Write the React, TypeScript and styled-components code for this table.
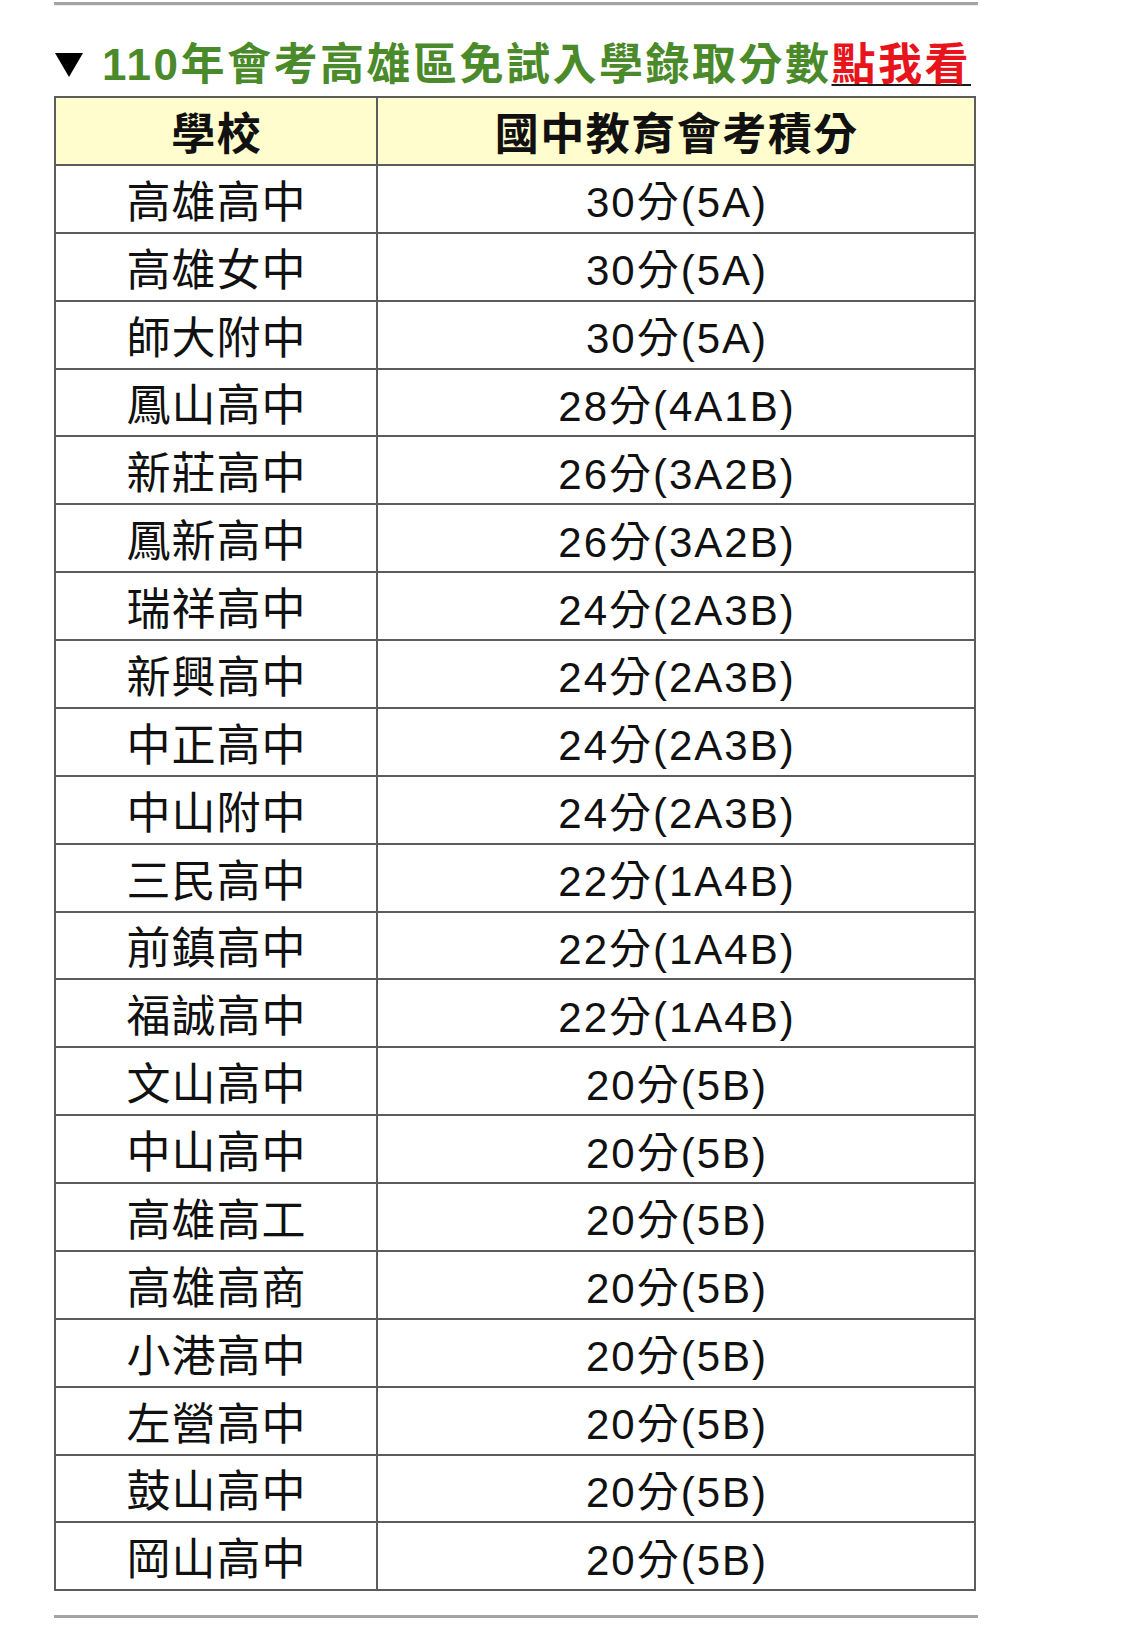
import React from "react";
import styled, { createGlobalStyle } from "styled-components";

const GlobalStyle = createGlobalStyle`
  html, body {
    margin: 0;
    padding: 0;
    background: #ffffff;
  }
  body {
    font-family: "Liberation Sans", "Noto Sans CJK TC", sans-serif;
    color: #111;
  }
`;

const Page = styled.div`
  width: 922px;
  padding: 2px 0 0 54px;
`;

const Rule = styled.div<{ $mt?: number }>`
  height: 3px;
  margin-top: ${(p) => p.$mt ?? 0}px;
  width: 924px;
  background: #a3a3a3;
  box-shadow: 0 1px 1px rgba(0, 0, 0, 0.08);
`;

const Title = styled.h2`
  display: flex;
  align-items: center;
  height: 46px;
  margin: 37px 0 8px 0;
  font-family: "Liberation Sans", "Noto Sans CJK TC", sans-serif;
  font-weight: 700;
  font-size: 44px;
  letter-spacing: 2.5px;
  line-height: 46px;
  color: #4a8a2a;
  white-space: nowrap;
`;

const Triangle = styled.span`
  display: inline-block;
  flex: none;
  width: 0;
  height: 0;
  margin: 0 19px 0 1px;
  border-left: 14px solid transparent;
  border-right: 14px solid transparent;
  border-top: 24px solid #000;
`;

const LinkText = styled.span`
  color: #e8141b;
  text-decoration: underline;
  text-decoration-color: #1a1a1a;
  text-decoration-thickness: 2px;
  text-underline-offset: 4px;
`;

const Table = styled.div`
  width: 918px;
  border: 2px solid #5c5c5c;
`;

const Row = styled.div<{ $head?: boolean }>`
  display: grid;
  grid-template-columns: 322px 1fr;
  height: 65.88px;
  background: ${(p) => (p.$head ? "#fffccd" : "#ffffff")};
  & + & {
    border-top: 2px solid #5c5c5c;
  }
`;

const Cell = styled.div<{ $left?: boolean; $head?: boolean; $score?: boolean }>`
  display: flex;
  align-items: center;
  justify-content: center;
  border-right: ${(p) => (p.$left ? "2px solid #5c5c5c" : "none")};
  font-family: "Liberation Sans", "Noto Sans CJK TC", sans-serif;
  font-weight: ${(p) => (p.$head ? 700 : 400)};
  font-size: ${(p) => (p.$head ? 44 : p.$score ? 42 : 44)}px;
  letter-spacing: ${(p) => (p.$head ? 1.5 : p.$score ? 2 : 1)}px;
  color: #111;
  white-space: nowrap;
  padding-left: ${(p) => (p.$head ? 1.5 : p.$score ? 2 : 1)}px;
`;

const rows: [string, string][] = [
  ["高雄高中", "30分(5A)"],
  ["高雄女中", "30分(5A)"],
  ["師大附中", "30分(5A)"],
  ["鳳山高中", "28分(4A1B)"],
  ["新莊高中", "26分(3A2B)"],
  ["鳳新高中", "26分(3A2B)"],
  ["瑞祥高中", "24分(2A3B)"],
  ["新興高中", "24分(2A3B)"],
  ["中正高中", "24分(2A3B)"],
  ["中山附中", "24分(2A3B)"],
  ["三民高中", "22分(1A4B)"],
  ["前鎮高中", "22分(1A4B)"],
  ["福誠高中", "22分(1A4B)"],
  ["文山高中", "20分(5B)"],
  ["中山高中", "20分(5B)"],
  ["高雄高工", "20分(5B)"],
  ["高雄高商", "20分(5B)"],
  ["小港高中", "20分(5B)"],
  ["左營高中", "20分(5B)"],
  ["鼓山高中", "20分(5B)"],
  ["岡山高中", "20分(5B)"],
];

export default function App() {
  return (
    <>
      <GlobalStyle />
      <Page>
        <Rule />
        <Title>
          <Triangle />
          110年會考高雄區免試入學錄取分數
          <LinkText>點我看</LinkText>
        </Title>
        <Table>
          <Row $head>
            <Cell $left $head>學校</Cell>
            <Cell $head>國中教育會考積分</Cell>
          </Row>
          {rows.map(([name, score]) => (
            <Row key={name}>
              <Cell $left>{name}</Cell>
              <Cell $score>{score}</Cell>
            </Row>
          ))}
        </Table>
        <Rule $mt={24} />
      </Page>
    </>
  );
}
